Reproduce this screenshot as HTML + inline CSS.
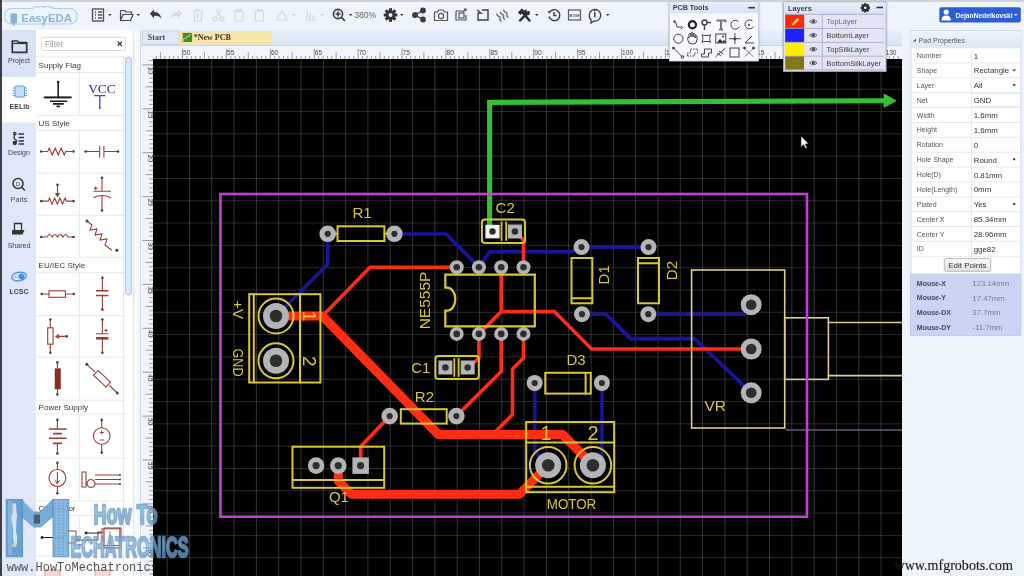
<!DOCTYPE html>
<html><head><meta charset="utf-8">
<style>
*{margin:0;padding:0;box-sizing:border-box}
svg{will-change:transform}
html,body{width:1024px;height:576px;overflow:hidden;background:#edf3fb;font-family:"Liberation Sans",sans-serif;position:relative}
.a{position:absolute}
#topline{left:0;top:0;width:1024px;height:2px;background:#cfd3d9}
#header{left:0;top:2px;width:1024px;height:29px;background:#eef4fb;border-bottom:1px solid #dde4ee}
#tabs{left:0;top:30px;width:36px;height:546px;background:#dfe7f9;border-left:2px solid #5a5e66}
#lib{left:36px;top:30px;width:97px;height:546px;background:#fff}
#split{left:133px;top:30px;width:7px;height:546px;background:#f4f8fc;border-left:1px solid #dfe7f0}
#tabbar{left:140px;top:30px;width:762px;height:16px;background:linear-gradient(#e9f0fa,#d7e5f7);border-bottom:1px solid #c8d6ea;border-left:1px solid #d0dae6}
#rulertop{left:140px;top:46px;width:762px;height:13px;background:#f1f5fb;border-left:1px solid #d0dae6}
#rulerleft{left:140px;top:59px;width:13px;height:517px;background:#f1f5fb;border-left:1px solid #d0dae6}
#canvas{left:153px;top:59px;width:749px;height:517px;background:#000;overflow:hidden}
#right{left:902px;top:30px;width:122px;height:546px;background:#eef4fc}
.tl{position:absolute;left:0;width:36px;text-align:center;font-size:7px;color:#3a3a3a;letter-spacing:-0.1px}
.hd{position:absolute;left:38px;font-size:8.4px;color:#333;}
.row{position:absolute;left:911px;width:110px;height:15px;border-bottom:1px solid #e3e8ef;background:#fff}
.lab{position:absolute;left:6px;top:3px;font-size:7.6px;color:#444}
.val{position:absolute;left:60px;top:0;width:50px;height:14px;border-left:1px solid #e3e8ef;font-size:8px;color:#222;padding:3px 0 0 3px}
.mrow{position:absolute;left:911px;width:110px;height:15px}
.ml{position:absolute;left:6px;top:3px;font-size:7.6px;font-weight:bold;color:#3d4660}
.mv{position:absolute;left:62px;top:3px;font-size:8px;color:#6a7390}
.lr{position:absolute;left:785px;width:99px;height:14px;border-bottom:1px solid #b9bfd0;background:#e6e6f5}
.sw{position:absolute;left:0;top:0;width:19px;height:13.5px}
.ey{position:absolute;left:19px;top:0;width:18px;height:13.5px;border-right:1px solid #b9bfd0}
.ln{position:absolute;left:41px;top:2.5px;font-size:7.6px;color:#333}
</style></head><body>
<div class="a" id="topline"></div>
<div class="a" id="header">
<svg class="a" style="left:0;top:-2px" width="1024" height="30" viewBox="0 0 1024 30">
<g fill="none" stroke="#b3cce6" stroke-width="1.1">
<path d="M12,8.5 L33,8.5 Q35,5.5 38,7.5 Q41,5 44,7.5 Q47,5 50,7.5 Q52,6 53,8.5 L69,8.5 Q77,8.5 77,16.3 Q77,24 69,24 L12,24 Q4.8,24 4.8,16.3 Q4.8,8.5 12,8.5 Z"/>
</g>
<path d="M10.5,15 Q10.5,13 13.8,13 Q17.1,13 17.1,15 L17.1,23 L15,23 L15,25.5 L12.6,25.5 L12.6,23 L10.5,23 Z" fill="#8ab3dc"/>
<text x="21.3" y="21.5" font-size="11.4" font-weight="bold" fill="#8db5dc" font-family="Liberation Sans">EasyEDA</text>
<path d="M44.5,21 Q44,25 42.5,26.5" stroke="#8db5dc" stroke-width="1.2" fill="none"/>
<!-- list icon -->
<g stroke="#4a4a4a" fill="none" stroke-width="1.3">
<rect x="92.5" y="9" width="11" height="12"/>
<path d="M95,12 h1 M98,12 h4 M95,15 h1 M98,15 h4 M95,18 h1 M98,18 h4"/>
</g>
<path d="M108,14 h3.5 l-1.75,2 z" fill="#333"/>
<!-- folder open -->
<path d="M120.5,10.5 h4 l1.5,1.5 h5.5 v2.5 M120.5,10.5 v10 h10 l2.5,-6 h-10 l-2.5,6" stroke="#4a4a4a" stroke-width="1.2" fill="none" stroke-linejoin="round"/>
<path d="M136.5,14 h3.5 l-1.75,2 z" fill="#333"/>
<!-- undo -->
<path d="M150,13.5 l4,-4 v2.5 q6,-0.5 7.5,7 q-2.5,-4 -7.5,-3 v2.5 z" fill="#3a3a3a"/>
<!-- redo grey -->
<path d="M182,13.5 l-4,-4 v2.5 q-6,-0.5 -7.5,7 q2.5,-4 7.5,-3 v2.5 z" fill="#d5d9de"/>
<!-- trash grey -->
<g stroke="#d3d7dc" stroke-width="1.2" fill="none">
<path d="M192.5,11 h10 M196,11 v-1.5 h3 v1.5 M194,11 l0.7,10 h6.6 l0.7,-10 M197.5,13 v6"/>
<!-- scissors -->
<circle cx="215" cy="19" r="2"/><circle cx="222" cy="19" r="2"/><path d="M216,17.5 l5,-8 M221,17.5 l-5,-8"/>
<!-- copy -->
<path d="M235,11 h8 v10 h-8 z M237,9.5 h4 v2 h-4 z"/>
<path d="M255.5,11 h8 v10 h-8 z M257.5,9.5 h4 v2 h-4 z"/>
<!-- align -->
<path d="M276,20 h12 M277,19 l5,-8 l5,8"/>
<path d="M306,20 h11 M307,20 v-10 M310,20 v-7 M313,20 v-5"/>
</g>
<path d="M292,14 h3.5 l-1.75,2 z M320.5,14 h3.5 l-1.75,2 z" fill="#c9cdd2"/>
<!-- zoom -->
<g stroke="#3c3c3c" stroke-width="1.6" fill="none">
<circle cx="338" cy="14" r="4.6"/><path d="M341.4,17.4 l3.6,3.6 M335.5,14 h5 M338,11.5 v5"/>
</g>
<path d="M349,14 h3.5 l-1.75,2 z" fill="#333"/>
<text x="354.2" y="18.3" font-size="8.6" fill="#666" font-family="Liberation Sans">380%</text>
<!-- gear -->
<g transform="translate(390.5,15)">
<circle r="4.8" fill="#333"/>
<g fill="#333"><rect x="-1.5" y="-6.8" width="3" height="13.6"/><rect x="-6.8" y="-1.5" width="13.6" height="3"/><rect x="-1.5" y="-6.8" width="3" height="13.6" transform="rotate(45)"/><rect x="-1.5" y="-6.8" width="3" height="13.6" transform="rotate(-45)"/></g>
<circle r="2" fill="#eef4fb"/>
</g>
<path d="M400,14 h3.5 l-1.75,2 z" fill="#333"/>
<!-- share -->
<g stroke="#3c3c3c" stroke-width="1.4" fill="none"><path d="M415,15 l8,-4.5 M415,15 l8,4.5"/><circle cx="415" cy="15" r="2.2" fill="#3c3c3c"/><circle cx="423" cy="10.5" r="2.2" fill="#3c3c3c"/><circle cx="423" cy="19.5" r="2.2" fill="#3c3c3c"/></g>
<!-- camera -->
<g stroke="#555" stroke-width="1.2" fill="none"><path d="M434.5,12 h3 l1.2,-2 h4.6 l1.2,2 h3 v8.5 h-13 z"/><circle cx="441" cy="16" r="2.6"/></g>
<!-- export -->
<g stroke="#555" stroke-width="1.2" fill="none"><path d="M456,11 h7 M456,11 v9 h10 v-5"/><rect x="459" y="13" width="5" height="5"/><path d="M463,12 l3,-3 M464,9 h2 v2"/></g>
<!-- import -->
<g stroke="#3c3c3c" stroke-width="1.4" fill="none"><path d="M478,13 v7 h10 v-10 h-6"/><path d="M477,10 l4,3 h-3"/></g>
<!-- wave -->
<g stroke="#666" stroke-width="1.3" fill="none"><path d="M498.5,20 q-1.5,-1.5 0,-3 q1.5,-1.5 0,-3 q-1.5,-1.5 0,-3 M502.5,20 q-1.5,-1.5 0,-3 q1.5,-1.5 0,-3 q-1.5,-1.5 0,-3 M506.5,20 q-1.5,-1.5 0,-3 q1.5,-1.5 0,-3 q-1.5,-1.5 0,-3" transform="rotate(-30 502.5 15)"/></g>
<!-- tools -->
<g stroke="#2a2a2a" stroke-width="2.4" fill="none" stroke-linecap="round"><path d="M520,20.5 l8.5,-8.5 M522,12 l7.5,8.5"/></g>
<path d="M517.8,12.5 l4,-4 l3,2.2 l-4.3,4.3 z" fill="#2a2a2a"/>
<path d="M527,9.5 a3,3 0 1 0 3,3 l-2,0.5 l-1.5,-1.5 z" fill="#2a2a2a"/>
<path d="M535,14 h3.5 l-1.75,2 z" fill="#333"/>
<!-- history -->
<g stroke="#3c3c3c" stroke-width="1.4" fill="none"><path d="M549.5,12.5 a5.5,5.5 0 1 1 -0.5,4"/><path d="M554,12 v3.5 h2.5"/></g>
<path d="M547.5,11 l2.8,0.5 l-1,2.6 z" fill="#3c3c3c"/>
<!-- BOM -->
<rect x="568.5" y="10" width="12" height="10" fill="none" stroke="#555" stroke-width="1.2"/>
<text x="574.5" y="16.8" font-size="4.2" font-weight="bold" fill="#555" text-anchor="middle" font-family="Liberation Sans">BOM</text>
<!-- info -->
<g stroke="#3c3c3c" stroke-width="1.3" fill="none"><path d="M591,19.5 a5.8,5.8 0 1 1 3,1.5 l-3,2 z"/></g>
<path d="M594.8,12.2 v5" stroke="#3c3c3c" stroke-width="1.5"/><circle cx="594.8" cy="10.6" r="0.9" fill="#3c3c3c"/>
<path d="M606,14 h3.5 l-1.75,2 z" fill="#333"/>
<!-- user button -->
<rect x="939.3" y="7.3" width="81.5" height="15.2" rx="1.8" fill="#2d5ed8"/>
<circle cx="946.2" cy="12" r="2.6" fill="#fff"/>
<path d="M941.5,20.5 q0,-5 4.7,-5 q4.7,0 4.7,5 z" fill="#fff"/>
<text x="955.5" y="18" font-size="7.6" font-weight="bold" fill="#fff" font-family="Liberation Sans" textLength="57" lengthAdjust="spacingAndGlyphs">DejanNedelkovski</text>
<path d="M1014,14 h3.5 l-1.75,2 z" fill="#fff"/>
</svg>

</div>
<div class="a" id="tabs">
<svg class="a" style="left:-2px;top:-30px" width="36" height="576" viewBox="0 0 36 576">
<rect x="2" y="30" width="34" height="47" fill="#d9e3f7"/>
<rect x="2" y="77" width="34" height="45.6" fill="#ffffff"/>
<path d="M2,122.6 h31 q3,0 3,3 v0 z" fill="#dfe7f9"/>
<!-- project folder -->
<path d="M12.3,41 h5 l1.2,1.6 h8.2 v9.8 h-14.4 z" fill="none" stroke="#333" stroke-width="1.7" stroke-linejoin="round"/>
<path d="M12.3,43.5 h14.4" stroke="#333" stroke-width="1.2"/>
<text x="19" y="63" font-size="7" fill="#444" text-anchor="middle" font-family="Liberation Sans">Project</text>
<!-- EELib chip -->
<rect x="15" y="86" width="9.5" height="11" rx="1" fill="#c7ddf5" stroke="#5a9ee0" stroke-width="1"/>
<path d="M12.5,88 h2.5 M12.5,90.5 h2.5 M12.5,93 h2.5 M12.5,95.5 h2.5 M24.5,88 h2.5 M24.5,90.5 h2.5 M24.5,93 h2.5 M24.5,95.5 h2.5" stroke="#5a9ee0" stroke-width="0.9"/>
<text x="19.5" y="109" font-size="7" font-weight="bold" fill="#444" text-anchor="middle" font-family="Liberation Sans">EELib</text>
<!-- Design -->
<g stroke="#333" stroke-width="1.3" fill="none">
<circle cx="14.8" cy="133.5" r="1.2"/><circle cx="14.8" cy="143" r="1.5" fill="#333"/>
<path d="M14.8,134.8 q-2,3 1,5 q2,1.5 -1,2.5"/>
<path d="M18.5,134 h5.5 M18.5,137.5 h5.5 M18.5,141 h5.5 M18.5,144 h5.5"/>
</g>
<text x="19" y="155" font-size="7" fill="#444" text-anchor="middle" font-family="Liberation Sans">Design</text>
<!-- Parts -->
<g stroke="#333" stroke-width="1.5" fill="none"><circle cx="18" cy="183.5" r="5"/><path d="M21.5,187 l3.5,3.5"/></g>
<text x="18" y="186" font-size="5.5" fill="#333" text-anchor="middle" font-family="Liberation Sans">D</text>
<text x="19" y="201.5" font-size="7" fill="#444" text-anchor="middle" font-family="Liberation Sans">Parts</text>
<!-- Shared -->
<path d="M14.5,223.5 h7 v8 h-7 z" fill="none" stroke="#333" stroke-width="1.3"/>
<path d="M12,230 h12.5 l-2,4.5 h-10.5 z" fill="#333"/>
<text x="19" y="248" font-size="7" fill="#444" text-anchor="middle" font-family="Liberation Sans">Shared</text>
<!-- LCSC -->
<ellipse cx="19" cy="276.5" rx="7.5" ry="4.2" fill="none" stroke="#4a8de0" stroke-width="1.2" transform="rotate(-10 19 276.5)"/>
<circle cx="21.5" cy="276.5" r="3" fill="#4a8de0"/>
<text x="12.5" y="278" font-size="4.2" fill="#4a8de0" font-family="Liberation Sans">LC</text>
<text x="19" y="294" font-size="7" font-weight="bold" fill="#444" text-anchor="middle" font-family="Liberation Sans">LCSC</text>
</svg>

</div>
<div class="a" id="lib">
<svg class="a" style="left:0;top:0" width="97" height="546" viewBox="36 30 97 546" font-family="Liberation Sans">
<!-- filter -->
<rect x="41.6" y="37.3" width="83.8" height="13.2" rx="1.5" fill="#fff" stroke="#d3dae3" stroke-width="1"/>
<text x="45" y="46.8" font-size="8.2" fill="#9a9a9a">Filter</text>
<path d="M117.6,41.6 l4.2,4.2 M121.8,41.6 l-4.2,4.2" stroke="#333" stroke-width="1.3"/>
<!-- grid lines -->
<g stroke="#e6eaef" stroke-width="1" fill="none">
<path d="M36,56.9 h89 M36,72.5 h89 M36,115.3 h89 M36,130.6 h89 M36,173.2 h89 M36,215.4 h89 M36,257.3 h89 M36,272.6 h89 M36,315.6 h89 M36,357.2 h89 M36,400.2 h89 M36,413.9 h89 M36,458 h89 M36,501 h89 M36,515.3 h89 M36,556 h89"/>
<path d="M79.4,72.5 v42.8 M79.4,130.6 v126.7 M79.4,272.6 v127.6 M79.4,413.9 v87.1 M79.4,515.3 v61"/>
<path d="M123.5,56.9 v520"/>
</g>
<g font-size="8" fill="#3a3a3a">
<text x="38.6" y="68">Supply Flag</text>
<text x="38.6" y="126">US Style</text>
<text x="38.6" y="268">EU/IEC Style</text>
<text x="38.6" y="410">Power Supply</text>
<text x="38.6" y="511">Connector</text>
</g>
<!-- scrollbar -->
<rect x="125.4" y="57" width="6" height="238" rx="3" fill="#d9e8fa" stroke="#a4c4ec" stroke-width="1"/>
<!-- GND -->
<g stroke="#1e1e1e" fill="none">
<path d="M58.2,82 v15.4" stroke-width="1.6"/>
<path d="M43.8,97.4 h27.8" stroke-width="2"/>
<path d="M49.9,101.2 h17.4 M53,103.9 h10.8 M56.5,106.4 h3.4" stroke-width="1.6"/>
</g>
<circle cx="58.2" cy="82" r="1.3" fill="#1e1e1e"/>
<!-- VCC -->
<text x="88.2" y="92.8" font-family="Liberation Serif" font-size="13.4" fill="#2a2a8c">VCC</text>
<path d="M94.2,95.6 h11.2 M99.8,95.6 v12.2" stroke="#4646a8" stroke-width="1.3" fill="none"/>
<circle cx="99.8" cy="108" r="1.1" fill="#4646a8"/>
<g stroke="#9c3d35" stroke-width="1.1" fill="none">
<!-- US resistor -->
<path d="M41.2,151.5 h6.5 l1.5,-3.3 l3,6.6 l3,-6.6 l3,6.6 l3,-6.6 l3,6.6 l1.5,-3.3 h6.8"/>
<!-- US cap -->
<path d="M85.6,151.5 h14.1 M99.7,146 v11.8 M103.9,146 v11.8 M103.9,151.5 h14.1"/>
<!-- pot -->
<path d="M41.2,201.1 h7 l1.3,-3 l2.6,6 l2.6,-6 l2.6,6 l2.6,-6 l2.6,6 l2.6,-6 l1.3,3 h6.5"/>
<path d="M57.5,185 v9"/>
<!-- pol cap -->
<path d="M102,177.7 v13.6 M93.4,191.3 h17.6 M93.4,197.8 q8.8,-4.5 17.6,0 M102,195.8 v14.7 M93.7,188.2 h4 M95.7,186.2 v4"/>
<!-- inductor -->
<path d="M41.2,237 h5.8 q2.6,-5 5.3,0 q2.6,-5 5.3,0 q2.6,-5 5.3,0 q2.6,-5 5.3,0 h5.3"/>
<!-- diag zigzag -->
<path d="M87,221 l5,4 l-2,5 l7,-1 l-2,6 l7,-1 l-2,6 l7,-1 l-2,6 l6.8,5.3"/>
<!-- EU resistor -->
<path d="M41.7,294 h7.3 M65.4,294 h8.4"/>
<rect x="49" y="290.8" width="16.4" height="6.5"/>
<!-- EU cap -->
<path d="M102.4,277.8 v13 M102.4,295.5 v14.1"/>
<path d="M96,290.8 h12.4 M96,295.5 h12.4" stroke-width="1.6"/>
<!-- EU pot -->
<rect x="47.7" y="327.8" width="5.3" height="16.4"/>
<path d="M50.3,319.5 v8.3 M50.3,344.2 v8.6 M66.7,336.4 h-11"/>
<!-- EU pol cap -->
<path d="M102.4,319.5 v14.3 M102.4,338.2 v14.6 M96,333.8 h12.4 M104.5,330.4 h3 M106,329 v3"/>
<!-- filled resistor -->
<path d="M57.4,362.4 v6 M57.4,389.3 v5.2"/>
<!-- diag box resistor -->
<path d="M86.8,364.3 l8,7.5 M109.5,385.5 l7.8,7.5"/>
<rect x="-8.5" y="-3.3" width="17" height="6.6" transform="translate(102,378.7) rotate(43)"/>
<!-- battery -->
<path d="M57.4,419.9 v9.1 M57.4,443.4 v10.1"/>
<!-- source -->
<circle cx="101.75" cy="436" r="8.3"/>
<path d="M101.75,419.9 v7.8 M101.75,444.3 v8.3 M101.75,430.5 v4 M99.8,432.5 h4 M99.8,440 h4"/>
<!-- current source -->
<circle cx="57.4" cy="478" r="8.5"/>
<path d="M57.4,462.7 v6.8 M57.4,486.5 v6.8 M57.4,472 v10"/><path d="M55.2,480.5 l2.2,3 l2.2,-3"/>
<!-- misc -->
<path d="M82,472 v15 h4 v-15 z M91,479.5 a4,4 0 1 0 0.1,0 M95,479.5 h25 M95,475 h25 M95,484 h25"/>
<!-- connector -->
<rect x="45" y="570" width="15" height="8" fill="#f3d9cf" stroke="#c98a7a" stroke-width="0.8"/><rect x="95" y="570" width="15" height="8" fill="#f3d9cf" stroke="#c98a7a" stroke-width="0.8"/>
<path d="M78,540 h20 v-8 h6 M78,545 h4"/>
<rect x="104" y="528" width="17" height="20"/>
</g>
<g fill="#9c3d35" stroke="none">
<path d="M54.8,193 h5.4 l-2.7,4.5 z"/>
<path d="M55,336.4 l4,-2.5 v5 z"/>
<rect x="54.75" y="368.4" width="6" height="20.9" fill="#8a2a22"/>
<rect x="96" y="337" width="12.4" height="2.6"/>
<path d="M48.8,428.2 h17.8 v1.6 h-17.8 z M53,432.8 h9 v1.6 h-9 z M48.8,437.4 h17.8 v1.6 h-17.8 z M53,442.6 h9 v1.6 h-9 z"/>
</g>
<g fill="#444">
<circle cx="41.2" cy="151.5" r="1.3"/><circle cx="73.5" cy="151.5" r="1.3"/>
<circle cx="85.6" cy="151.5" r="1.3"/><circle cx="118" cy="151.5" r="1.3"/>
<circle cx="41.2" cy="201.1" r="1.3"/><circle cx="73.5" cy="201.1" r="1.3"/><circle cx="57.5" cy="184.7" r="1.3"/>
<circle cx="102" cy="177.7" r="1.3"/><circle cx="102" cy="210.5" r="1.3"/>
<circle cx="41.2" cy="237" r="1.3"/><circle cx="73.5" cy="237" r="1.3"/>
<circle cx="87" cy="221" r="1.5"/><circle cx="116.8" cy="250.3" r="1.5"/>
<circle cx="41.7" cy="294" r="1.3"/><circle cx="73.8" cy="294" r="1.3"/>
<circle cx="102.4" cy="277.8" r="1.3"/><circle cx="102.4" cy="309.6" r="1.3"/>
<circle cx="50.3" cy="319.5" r="1.3"/><circle cx="50.3" cy="352.8" r="1.3"/><circle cx="66.7" cy="336.4" r="1.3"/>
<circle cx="102.4" cy="319.5" r="1.3"/><circle cx="102.4" cy="352.8" r="1.3"/>
<circle cx="57.4" cy="362.4" r="1.3"/><circle cx="57.4" cy="394.5" r="1.3"/>
<circle cx="86.8" cy="364.3" r="1.5"/><circle cx="117.25" cy="393" r="1.5"/>
<circle cx="57.4" cy="419.9" r="1.3"/><circle cx="57.4" cy="453.5" r="1.3"/>
<circle cx="101.75" cy="419.9" r="1.3"/><circle cx="101.75" cy="452.6" r="1.3"/>
<circle cx="57.4" cy="462.7" r="1.3"/><circle cx="57.4" cy="493.3" r="1.3"/>
<circle cx="120" cy="475" r="1"/><circle cx="120" cy="479.5" r="1"/><circle cx="120" cy="484" r="1"/>
<circle cx="78" cy="540" r="1.3"/>
</g>
</svg>

</div>
<div class="a" id="split"></div>
<div class="a" id="tabbar">
<svg class="a" style="left:-1px;top:0" width="762" height="16" viewBox="140 30 762 16">
<rect x="142.7" y="31" width="35.7" height="13.5" fill="#dfe9f7" stroke="#c3d2e6" stroke-width="0.8"/>
<text x="147.8" y="40" font-family="Liberation Serif" font-size="8" font-weight="bold" fill="#4a4a4a">Start</text>
<rect x="178.6" y="31" width="93.6" height="13.5" fill="#f6e4a9"/>
<rect x="182.7" y="32.9" width="9.4" height="9.1" fill="#3c8d2c"/>
<path d="M183.5,41.5 v-3 h3 v-2 h3 v-2 h2" stroke="#8fd17a" stroke-width="1" fill="none"/>
<text x="193.7" y="39.8" font-family="Liberation Serif" font-size="8" font-weight="bold" fill="#333">*New PCB</text>
</svg>

</div>
<div class="a" id="rulertop"></div>
<div class="a" id="rulerleft"></div>
<svg class="a" style="left:0;top:0" width="1024" height="576" viewBox="0 0 1024 576">
<g font-family="Liberation Sans"><path d="M156.2,56 V59 M160.6,52.2 V59 M164.9,56 V59 M169.3,56 V59 M173.7,56 V59 M178.1,56 V59 M182.5,48.8 V59 M186.9,56 V59 M191.3,56 V59 M195.7,56 V59 M200.1,56 V59 M204.4,52.2 V59 M208.8,56 V59 M213.2,56 V59 M217.6,56 V59 M222.0,56 V59 M226.4,48.8 V59 M230.8,56 V59 M235.2,56 V59 M239.6,56 V59 M244.0,56 V59 M248.3,52.2 V59 M252.7,56 V59 M257.1,56 V59 M261.5,56 V59 M265.9,56 V59 M270.3,48.8 V59 M274.7,56 V59 M279.1,56 V59 M283.5,56 V59 M287.9,56 V59 M292.2,52.2 V59 M296.6,56 V59 M301.0,56 V59 M305.4,56 V59 M309.8,56 V59 M314.2,48.8 V59 M318.6,56 V59 M323.0,56 V59 M327.4,56 V59 M331.8,56 V59 M336.1,52.2 V59 M340.5,56 V59 M344.9,56 V59 M349.3,56 V59 M353.7,56 V59 M358.1,48.8 V59 M362.5,56 V59 M366.9,56 V59 M371.3,56 V59 M375.7,56 V59 M380.0,52.2 V59 M384.4,56 V59 M388.8,56 V59 M393.2,56 V59 M397.6,56 V59 M402.0,48.8 V59 M406.4,56 V59 M410.8,56 V59 M415.2,56 V59 M419.6,56 V59 M423.9,52.2 V59 M428.3,56 V59 M432.7,56 V59 M437.1,56 V59 M441.5,56 V59 M445.9,48.8 V59 M450.3,56 V59 M454.7,56 V59 M459.1,56 V59 M463.5,56 V59 M467.8,52.2 V59 M472.2,56 V59 M476.6,56 V59 M481.0,56 V59 M485.4,56 V59 M489.8,48.8 V59 M494.2,56 V59 M498.6,56 V59 M503.0,56 V59 M507.4,56 V59 M511.8,52.2 V59 M516.1,56 V59 M520.5,56 V59 M524.9,56 V59 M529.3,56 V59 M533.7,48.8 V59 M538.1,56 V59 M542.5,56 V59 M546.9,56 V59 M551.3,56 V59 M555.6,52.2 V59 M560.0,56 V59 M564.4,56 V59 M568.8,56 V59 M573.2,56 V59 M577.6,48.8 V59 M582.0,56 V59 M586.4,56 V59 M590.8,56 V59 M595.2,56 V59 M599.5,52.2 V59 M603.9,56 V59 M608.3,56 V59 M612.7,56 V59 M617.1,56 V59 M621.5,48.8 V59 M625.9,56 V59 M630.3,56 V59 M634.7,56 V59 M639.1,56 V59 M643.5,52.2 V59 M647.8,56 V59 M652.2,56 V59 M656.6,56 V59 M661.0,56 V59 M665.4,48.8 V59 M669.8,56 V59 M674.2,56 V59 M678.6,56 V59 M683.0,56 V59 M687.3,52.2 V59 M691.7,56 V59 M696.1,56 V59 M700.5,56 V59 M704.9,56 V59 M709.3,48.8 V59 M713.7,56 V59 M718.1,56 V59 M722.5,56 V59 M726.9,56 V59 M731.2,52.2 V59 M735.6,56 V59 M740.0,56 V59 M744.4,56 V59 M748.8,56 V59 M753.2,48.8 V59 M757.6,56 V59 M762.0,56 V59 M766.4,56 V59 M770.8,56 V59 M775.1,52.2 V59 M779.5,56 V59 M783.9,56 V59 M788.3,56 V59 M792.7,56 V59 M797.1,48.8 V59 M801.5,56 V59 M805.9,56 V59 M810.3,56 V59 M814.7,56 V59 M819.0,52.2 V59 M823.4,56 V59 M827.8,56 V59 M832.2,56 V59 M836.6,56 V59 M841.0,48.8 V59 M845.4,56 V59 M849.8,56 V59 M854.2,56 V59 M858.6,56 V59 M862.9,52.2 V59 M867.3,56 V59 M871.7,56 V59 M876.1,56 V59 M880.5,56 V59 M884.9,48.8 V59 M889.3,56 V59 M893.7,56 V59 M898.1,56 V59 M149.2,60.5 H153 M142.3,64.9 H153 M149.2,69.3 H153 M149.2,73.7 H153 M149.2,78.1 H153 M149.2,82.5 H153 M145.7,86.9 H153 M149.2,91.2 H153 M149.2,95.6 H153 M149.2,100.0 H153 M149.2,104.4 H153 M142.3,108.8 H153 M149.2,113.2 H153 M149.2,117.6 H153 M149.2,122.0 H153 M149.2,126.4 H153 M145.7,130.8 H153 M149.2,135.1 H153 M149.2,139.5 H153 M149.2,143.9 H153 M149.2,148.3 H153 M142.3,152.7 H153 M149.2,157.1 H153 M149.2,161.5 H153 M149.2,165.9 H153 M149.2,170.3 H153 M145.7,174.6 H153 M149.2,179.0 H153 M149.2,183.4 H153 M149.2,187.8 H153 M149.2,192.2 H153 M142.3,196.6 H153 M149.2,201.0 H153 M149.2,205.4 H153 M149.2,209.8 H153 M149.2,214.2 H153 M145.7,218.5 H153 M149.2,222.9 H153 M149.2,227.3 H153 M149.2,231.7 H153 M149.2,236.1 H153 M142.3,240.5 H153 M149.2,244.9 H153 M149.2,249.3 H153 M149.2,253.7 H153 M149.2,258.1 H153 M145.7,262.4 H153 M149.2,266.8 H153 M149.2,271.2 H153 M149.2,275.6 H153 M149.2,280.0 H153 M142.3,284.4 H153 M149.2,288.8 H153 M149.2,293.2 H153 M149.2,297.6 H153 M149.2,302.0 H153 M145.7,306.4 H153 M149.2,310.7 H153 M149.2,315.1 H153 M149.2,319.5 H153 M149.2,323.9 H153 M142.3,328.3 H153 M149.2,332.7 H153 M149.2,337.1 H153 M149.2,341.5 H153 M149.2,345.9 H153 M145.7,350.2 H153 M149.2,354.6 H153 M149.2,359.0 H153 M149.2,363.4 H153 M149.2,367.8 H153 M142.3,372.2 H153 M149.2,376.6 H153 M149.2,381.0 H153 M149.2,385.4 H153 M149.2,389.8 H153 M145.7,394.1 H153 M149.2,398.5 H153 M149.2,402.9 H153 M149.2,407.3 H153 M149.2,411.7 H153 M142.3,416.1 H153 M149.2,420.5 H153 M149.2,424.9 H153 M149.2,429.3 H153 M149.2,433.7 H153 M145.7,438.0 H153 M149.2,442.4 H153 M149.2,446.8 H153 M149.2,451.2 H153 M149.2,455.6 H153 M142.3,460.0 H153 M149.2,464.4 H153 M149.2,468.8 H153 M149.2,473.2 H153 M149.2,477.6 H153 M145.7,481.9 H153 M149.2,486.3 H153 M149.2,490.7 H153 M149.2,495.1 H153 M149.2,499.5 H153 M142.3,503.9 H153 M149.2,508.3 H153 M149.2,512.7 H153 M149.2,517.1 H153 M149.2,521.5 H153 M145.7,525.9 H153 M149.2,530.2 H153 M149.2,534.6 H153 M149.2,539.0 H153 M149.2,543.4 H153 M142.3,547.8 H153 M149.2,552.2 H153 M149.2,556.6 H153 M149.2,561.0 H153 M149.2,565.4 H153 M145.7,569.8 H153 M149.2,574.1 H153" stroke="#8a8f96" stroke-width="0.9" fill="none"/>
<text x="183.1" y="54.8" font-size="6.6" fill="#444">50</text>
<text x="227.0" y="54.8" font-size="6.6" fill="#444">55</text>
<text x="270.9" y="54.8" font-size="6.6" fill="#444">60</text>
<text x="314.8" y="54.8" font-size="6.6" fill="#444">65</text>
<text x="358.7" y="54.8" font-size="6.6" fill="#444">70</text>
<text x="402.6" y="54.8" font-size="6.6" fill="#444">75</text>
<text x="446.5" y="54.8" font-size="6.6" fill="#444">80</text>
<text x="490.4" y="54.8" font-size="6.6" fill="#444">85</text>
<text x="534.3" y="54.8" font-size="6.6" fill="#444">90</text>
<text x="578.2" y="54.8" font-size="6.6" fill="#444">95</text>
<text x="622.1" y="54.8" font-size="6.6" fill="#444">100</text>
<text x="666.0" y="54.8" font-size="6.6" fill="#444">105</text>
<text x="709.9" y="54.8" font-size="6.6" fill="#444">110</text>
<text x="753.8" y="54.8" font-size="6.6" fill="#444">115</text>
<text x="797.7" y="54.8" font-size="6.6" fill="#444">120</text>
<text x="841.6" y="54.8" font-size="6.6" fill="#444">125</text>
<text x="885.5" y="54.8" font-size="6.6" fill="#444">130</text>
<text x="0" y="0" transform="translate(147.6,66.7) rotate(90)" font-size="6.6" fill="#444">10</text>
<text x="0" y="0" transform="translate(147.6,110.6) rotate(90)" font-size="6.6" fill="#444">15</text>
<text x="0" y="0" transform="translate(147.6,154.5) rotate(90)" font-size="6.6" fill="#444">20</text>
<text x="0" y="0" transform="translate(147.6,198.4) rotate(90)" font-size="6.6" fill="#444">25</text>
<text x="0" y="0" transform="translate(147.6,242.3) rotate(90)" font-size="6.6" fill="#444">30</text>
<text x="0" y="0" transform="translate(147.6,286.2) rotate(90)" font-size="6.6" fill="#444">35</text>
<text x="0" y="0" transform="translate(147.6,330.1) rotate(90)" font-size="6.6" fill="#444">40</text>
<text x="0" y="0" transform="translate(147.6,374.0) rotate(90)" font-size="6.6" fill="#444">45</text>
<text x="0" y="0" transform="translate(147.6,417.9) rotate(90)" font-size="6.6" fill="#444">50</text>
<text x="0" y="0" transform="translate(147.6,461.8) rotate(90)" font-size="6.6" fill="#444">55</text>
<text x="0" y="0" transform="translate(147.6,505.7) rotate(90)" font-size="6.6" fill="#444">60</text>
<text x="0" y="0" transform="translate(147.6,549.6) rotate(90)" font-size="6.6" fill="#444">65</text></g>
</svg>
<div class="a" id="canvas">
<svg width="749" height="517" viewBox="153 59 749 517">
<defs>
<pattern id="grid" x="166.65" y="66.4" width="22.31" height="22.31" patternUnits="userSpaceOnUse">
<path d="M0,0 L22.31,0 M0,0 L0,22.31" stroke="#545454" stroke-width="1.2" fill="none"/>
</pattern>
</defs>
<rect x="153" y="59" width="749" height="517" fill="url(#grid)"/>
<g font-family="Liberation Sans, sans-serif">
<path d="M276.0,316.0 L327.7,264.4 L327.7,233.8" stroke="#16169a" stroke-width="3.6" fill="none" stroke-linejoin="round" stroke-linecap="round" />
<path d="M394.4,234.0 L446.0,234.0 L479.0,267.0" stroke="#16169a" stroke-width="3.6" fill="none" stroke-linejoin="round" stroke-linecap="round" />
<path d="M479.0,267.0 L489.6,251.8 L571.0,251.8 L581.5,247.1" stroke="#16169a" stroke-width="3.6" fill="none" stroke-linejoin="round" stroke-linecap="round" />
<path d="M581.5,247.1 L648.5,247.1" stroke="#16169a" stroke-width="3.6" fill="none" stroke-linejoin="round" stroke-linecap="round" />
<path d="M582.0,314.2 L606.0,314.2 L630.5,338.6 L694.6,338.6 L751.2,392.8" stroke="#16169a" stroke-width="3.6" fill="none" stroke-linejoin="round" stroke-linecap="round" />
<path d="M648.3,314.2 L744.0,314.2 L751.2,304.7" stroke="#16169a" stroke-width="3.6" fill="none" stroke-linejoin="round" stroke-linecap="round" />
<path d="M534.8,383.0 L534.8,451.3 L548.2,465.3" stroke="#16169a" stroke-width="3.6" fill="none" stroke-linejoin="round" stroke-linecap="round" />
<path d="M602.0,383.0 L602.0,456.0 L592.9,465.3" stroke="#16169a" stroke-width="3.6" fill="none" stroke-linejoin="round" stroke-linecap="round" />
<path d="M276.0,316.0 L322.5,316.0 L438.3,434.5 L562.5,434.5 L593.0,465.3" stroke="#ff2d14" stroke-width="9" fill="none" stroke-linejoin="round" stroke-linecap="round" />
<path d="M338.3,465.6 L338.3,481.0 L351.5,494.3 L519.4,494.3 L547.8,465.3" stroke="#ff2d14" stroke-width="9" fill="none" stroke-linejoin="round" stroke-linecap="round" />
<path d="M322.5,316.0 L370.0,267.3 L456.7,267.3" stroke="#ff2d14" stroke-width="3.6" fill="none" stroke-linejoin="round" stroke-linecap="round" />
<path d="M501.2,267.3 L501.2,311.6 L554.4,311.6 L591.6,348.9 L751.2,349.0" stroke="#ff2d14" stroke-width="3.6" fill="none" stroke-linejoin="round" stroke-linecap="round" />
<path d="M478.9,333.9 L501.2,311.6" stroke="#ff2d14" stroke-width="3.6" fill="none" stroke-linejoin="round" stroke-linecap="round" />
<path d="M478.9,333.9 L478.9,358.0 L469.0,367.5" stroke="#ff2d14" stroke-width="3.6" fill="none" stroke-linejoin="round" stroke-linecap="round" />
<path d="M501.2,333.9 L501.2,371.5 L456.4,416.1" stroke="#ff2d14" stroke-width="3.6" fill="none" stroke-linejoin="round" stroke-linecap="round" />
<path d="M523.5,333.9 L523.5,358.0 L512.5,369.0 L512.5,414.5 L494.0,433.0" stroke="#ff2d14" stroke-width="3.6" fill="none" stroke-linejoin="round" stroke-linecap="round" />
<path d="M514.9,231.5 L523.5,240.0 L523.5,267.3" stroke="#ff2d14" stroke-width="3.6" fill="none" stroke-linejoin="round" stroke-linecap="round" />
<path d="M389.7,416.1 L360.6,446.7 L360.6,465.6" stroke="#ff2d14" stroke-width="3.6" fill="none" stroke-linejoin="round" stroke-linecap="round" />
<rect x="691.6" y="270.0" width="93.1" height="158.0" rx="0" stroke="#ddd08c" stroke-width="1.6" fill="none"/>
<rect x="784.7" y="317.8" width="43.7" height="61.6" rx="0" stroke="#ddd08c" stroke-width="1.6" fill="none"/>
<path d="M828.4,322.5 L905.0,322.5" stroke="#ddd08c" stroke-width="1.6" fill="none" stroke-linejoin="round" stroke-linecap="round" />
<path d="M828.4,375.6 L905.0,375.6" stroke="#ddd08c" stroke-width="1.6" fill="none" stroke-linejoin="round" stroke-linecap="round" />
<path d="M489.6,226 L489.6,102.4 L886,100.7" stroke="#33c133" stroke-width="5.1" fill="none" stroke-linejoin="miter"/>
<polygon points="884,94 896.2,100.7 884,107.4" fill="#33c133" stroke="#33c133" stroke-width="0.8" stroke-linejoin="round"/>
<rect x="337.5" y="226.3" width="46.9" height="14.7" rx="0" stroke="#d8c63a" stroke-width="2" fill="none"/>
<path d="M335.0,233.8 L337.5,233.8" stroke="#d8c63a" stroke-width="2" fill="none" stroke-linejoin="round" stroke-linecap="round" />
<path d="M384.4,233.8 L387.0,233.8" stroke="#d8c63a" stroke-width="2" fill="none" stroke-linejoin="round" stroke-linecap="round" />
<circle cx="327.7" cy="233.8" r="8.3" fill="#b4b4b4"/><circle cx="327.7" cy="233.8" r="3.1" fill="#2e2e2e"/>
<circle cx="394.4" cy="233.8" r="8.3" fill="#b4b4b4"/><circle cx="394.4" cy="233.8" r="3.1" fill="#2e2e2e"/>
<text x="362.0" y="217.5" font-size="15" fill="#d8c63a" text-anchor="middle" >R1</text>
<rect x="400.8" y="409.2" width="45.9" height="14.4" rx="0" stroke="#d8c63a" stroke-width="2" fill="none"/>
<circle cx="389.7" cy="416.1" r="8.3" fill="#b4b4b4"/><circle cx="389.7" cy="416.1" r="3.1" fill="#2e2e2e"/>
<circle cx="456.4" cy="416.1" r="8.3" fill="#b4b4b4"/><circle cx="456.4" cy="416.1" r="3.1" fill="#2e2e2e"/>
<text x="424.4" y="402.2" font-size="15" fill="#d8c63a" text-anchor="middle" >R2</text>
<rect x="481.9" y="219.6" width="43.1" height="23.4" rx="3" stroke="#d8c63a" stroke-width="2" fill="none"/>
<rect x="485.4" y="224.8" width="14.2" height="13.6" fill="#f4f4f4"/><circle cx="492.5" cy="231.5" r="3.2" fill="#2e2e2e"/>
<rect x="507.9" y="224.5" width="14.0" height="14.0" fill="#b4b4b4"/><circle cx="514.9" cy="231.5" r="3.3" fill="#2e2e2e"/>
<path d="M501.5,222.5 L501.5,240.0" stroke="#d8c63a" stroke-width="1.8" fill="none" stroke-linejoin="round" stroke-linecap="round" />
<path d="M506.2,222.5 L506.2,240.0" stroke="#d8c63a" stroke-width="1.8" fill="none" stroke-linejoin="round" stroke-linecap="round" />
<text x="505.2" y="212.9" font-size="15" fill="#d8c63a" text-anchor="middle" >C2</text>
<rect x="435.4" y="356.0" width="43.4" height="23.0" rx="3" stroke="#d8c63a" stroke-width="2" fill="none"/>
<rect x="438.4" y="360.5" width="14.0" height="14.0" fill="#b4b4b4"/><circle cx="445.4" cy="367.5" r="3.3" fill="#2e2e2e"/>
<rect x="460.7" y="360.5" width="14.0" height="14.0" fill="#b4b4b4"/><circle cx="467.7" cy="367.5" r="3.3" fill="#2e2e2e"/>
<path d="M454.3,359.0 L454.3,376.0" stroke="#d8c63a" stroke-width="1.8" fill="none" stroke-linejoin="round" stroke-linecap="round" />
<path d="M458.7,359.0 L458.7,376.0" stroke="#d8c63a" stroke-width="1.8" fill="none" stroke-linejoin="round" stroke-linecap="round" />
<text x="420.8" y="372.7" font-size="15" fill="#d8c63a" text-anchor="middle" >C1</text>
<path d="M445.3,274.7 L534.8,274.7 L534.8,326.3 L445.3,326.3 L445.3,310.6 L447.3,310.6 A8,11.45 0 0 0 447.3,287.7 L445.3,287.7 Z" stroke="#d8c63a" stroke-width="2.2" fill="none"/>
<circle cx="456.7" cy="267.3" r="7.0" fill="#b4b4b4"/><circle cx="456.7" cy="267.3" r="3.3" fill="#2e2e2e"/>
<circle cx="456.7" cy="333.9" r="7.0" fill="#b4b4b4"/><circle cx="456.7" cy="333.9" r="3.3" fill="#2e2e2e"/>
<circle cx="478.9" cy="267.3" r="7.0" fill="#b4b4b4"/><circle cx="478.9" cy="267.3" r="3.3" fill="#2e2e2e"/>
<circle cx="478.9" cy="333.9" r="7.0" fill="#b4b4b4"/><circle cx="478.9" cy="333.9" r="3.3" fill="#2e2e2e"/>
<circle cx="501.2" cy="267.3" r="7.0" fill="#b4b4b4"/><circle cx="501.2" cy="267.3" r="3.3" fill="#2e2e2e"/>
<circle cx="501.2" cy="333.9" r="7.0" fill="#b4b4b4"/><circle cx="501.2" cy="333.9" r="3.3" fill="#2e2e2e"/>
<circle cx="523.5" cy="267.3" r="7.0" fill="#b4b4b4"/><circle cx="523.5" cy="267.3" r="3.3" fill="#2e2e2e"/>
<circle cx="523.5" cy="333.9" r="7.0" fill="#b4b4b4"/><circle cx="523.5" cy="333.9" r="3.3" fill="#2e2e2e"/>
<text x="0" y="0" transform="translate(424.0,300.5) rotate(-90)" font-size="15.5" fill="#d8c63a" text-anchor="middle" dominant-baseline="central" >NE555P</text>
<rect x="571.5" y="258.0" width="20.8" height="45.3" rx="0" stroke="#d8c63a" stroke-width="2" fill="none"/>
<path d="M571.5,298.3 L592.3,298.3" stroke="#d8c63a" stroke-width="2" fill="none" stroke-linejoin="round" stroke-linecap="round" />
<circle cx="581.5" cy="247.1" r="8.0" fill="#b4b4b4"/><circle cx="581.5" cy="247.1" r="3.1" fill="#2e2e2e"/>
<circle cx="582.0" cy="314.2" r="8.0" fill="#b4b4b4"/><circle cx="582.0" cy="314.2" r="3.1" fill="#2e2e2e"/>
<text x="0" y="0" transform="translate(603.8,274.8) rotate(-90)" font-size="15" fill="#d8c63a" text-anchor="middle" dominant-baseline="central" >D1</text>
<rect x="638.0" y="258.0" width="21.0" height="45.3" rx="0" stroke="#d8c63a" stroke-width="2" fill="none"/>
<path d="M638.0,263.3 L659.0,263.3" stroke="#d8c63a" stroke-width="2" fill="none" stroke-linejoin="round" stroke-linecap="round" />
<circle cx="648.5" cy="247.1" r="8.0" fill="#b4b4b4"/><circle cx="648.5" cy="247.1" r="3.1" fill="#2e2e2e"/>
<circle cx="648.3" cy="314.2" r="8.0" fill="#b4b4b4"/><circle cx="648.3" cy="314.2" r="3.1" fill="#2e2e2e"/>
<text x="0" y="0" transform="translate(671.5,270.6) rotate(-90)" font-size="15" fill="#d8c63a" text-anchor="middle" dominant-baseline="central" >D2</text>
<rect x="545.3" y="372.8" width="45.5" height="20.8" rx="0" stroke="#d8c63a" stroke-width="2" fill="none"/>
<path d="M585.6,372.8 L585.6,393.6" stroke="#d8c63a" stroke-width="2" fill="none" stroke-linejoin="round" stroke-linecap="round" />
<circle cx="534.7" cy="383.0" r="8.0" fill="#b4b4b4"/><circle cx="534.7" cy="383.0" r="3.1" fill="#2e2e2e"/>
<circle cx="601.9" cy="383.0" r="8.0" fill="#b4b4b4"/><circle cx="601.9" cy="383.0" r="3.1" fill="#2e2e2e"/>
<text x="576.0" y="365.4" font-size="15" fill="#d8c63a" text-anchor="middle" >D3</text>
<circle cx="751.2" cy="304.7" r="10.5" fill="#b4b4b4"/><circle cx="751.2" cy="304.7" r="5.3" fill="#2e2e2e"/>
<circle cx="751.2" cy="349.0" r="10.5" fill="#b4b4b4"/><circle cx="751.2" cy="349.0" r="5.3" fill="#2e2e2e"/>
<circle cx="751.2" cy="392.8" r="10.5" fill="#b4b4b4"/><circle cx="751.2" cy="392.8" r="5.3" fill="#2e2e2e"/>
<text x="715.3" y="411.3" font-size="15.5" fill="#d8c63a" text-anchor="middle" >VR</text>
<rect x="249.2" y="294.2" width="71.2" height="88.3" rx="0" stroke="#d8c63a" stroke-width="2" fill="none"/>
<path d="M253.8,294.2 L253.8,382.5" stroke="#d8c63a" stroke-width="2" fill="none" stroke-linejoin="round" stroke-linecap="round" />
<path d="M300.0,294.2 L300.0,382.5" stroke="#d8c63a" stroke-width="2" fill="none" stroke-linejoin="round" stroke-linecap="round" />
<circle cx="276" cy="316.0" r="17.5" stroke="#d8c63a" stroke-width="2" fill="none"/>
<circle cx="276.0" cy="316.0" r="13.0" fill="#b4b4b4"/><circle cx="276.0" cy="316.0" r="6.3" fill="#2e2e2e"/>
<circle cx="276" cy="360.8" r="17.5" stroke="#d8c63a" stroke-width="2" fill="none"/>
<circle cx="276.0" cy="360.8" r="13.0" fill="#b4b4b4"/><circle cx="276.0" cy="360.8" r="6.3" fill="#2e2e2e"/>
<text x="0" y="0" transform="translate(309.0,316.0) rotate(90)" font-size="19" fill="#d8c63a" text-anchor="middle" dominant-baseline="central" >1</text>
<text x="0" y="0" transform="translate(309.0,361.2) rotate(90)" font-size="19" fill="#d8c63a" text-anchor="middle" dominant-baseline="central" >2</text>
<text x="0" y="0" transform="translate(238.0,309.5) rotate(90)" font-size="15" fill="#d8c63a" text-anchor="middle" dominant-baseline="central" >+V</text>
<text x="0" y="0" transform="translate(238.0,362.5) rotate(90)" font-size="15" fill="#d8c63a" text-anchor="middle" dominant-baseline="central" textLength="28" lengthAdjust="spacingAndGlyphs">GND</text>
<rect x="292.5" y="446.7" width="91.7" height="41.1" rx="0" stroke="#d8c63a" stroke-width="2" fill="none"/>
<path d="M292.5,480.0 L384.2,480.0" stroke="#d8c63a" stroke-width="2" fill="none" stroke-linejoin="round" stroke-linecap="round" />
<circle cx="316.1" cy="465.6" r="8.3" fill="#b4b4b4"/><circle cx="316.1" cy="465.6" r="3.6" fill="#2e2e2e"/>
<circle cx="338.3" cy="465.6" r="8.3" fill="#b4b4b4"/><circle cx="338.3" cy="465.6" r="3.6" fill="#2e2e2e"/>
<rect x="352.4" y="457.4" width="16.5" height="16.5" fill="#b4b4b4"/><circle cx="360.6" cy="465.6" r="3.6" fill="#2e2e2e"/>
<text x="338.9" y="502.2" font-size="15" fill="#d8c63a" text-anchor="middle" >Q1</text>
<rect x="526.2" y="422.0" width="88.0" height="70.2" rx="0" stroke="#d8c63a" stroke-width="2" fill="none"/>
<path d="M526.2,442.6 L614.2,442.6" stroke="#d8c63a" stroke-width="2" fill="none" stroke-linejoin="round" stroke-linecap="round" />
<path d="M526.2,486.7 L614.2,486.7" stroke="#d8c63a" stroke-width="2" fill="none" stroke-linejoin="round" stroke-linecap="round" />
<circle cx="548.2" cy="465.3" r="18.3" stroke="#d8c63a" stroke-width="2" fill="none"/>
<circle cx="548.2" cy="465.3" r="13.0" fill="#b4b4b4"/><circle cx="548.2" cy="465.3" r="6.3" fill="#2e2e2e"/>
<circle cx="592.9" cy="465.3" r="18.3" stroke="#d8c63a" stroke-width="2" fill="none"/>
<circle cx="592.9" cy="465.3" r="13.0" fill="#b4b4b4"/><circle cx="592.9" cy="465.3" r="6.3" fill="#2e2e2e"/>
<text x="546.1" y="439.8" font-size="20" fill="#d8c63a" text-anchor="middle" >1</text>
<text x="593.0" y="439.8" font-size="20" fill="#d8c63a" text-anchor="middle" >2</text>
<text x="571.5" y="508.9" font-size="15" fill="#d8c63a" text-anchor="middle" textLength="49.5" lengthAdjust="spacingAndGlyphs">MOTOR</text>
<path d="M786.0,430.0 L905.0,430.0" stroke="#6e5676" stroke-width="1.3" fill="none" stroke-linejoin="round" stroke-linecap="round" />
<rect x="220.4" y="194.0" width="586.6" height="322.7" rx="0" stroke="#c23fd6" stroke-width="2.6" fill="none"/>
<path d="M801,136 L801,147 L803.6,144.6 L805.4,148.6 L807,147.8 L805.3,144 L808.6,143.8 Z" fill="#fff" stroke="#222" stroke-width="0.6"/>
</g>
</svg>
</div>
<div class="a" id="right">
</div>
<svg class="a" style="left:0;top:0" width="1024" height="576" viewBox="0 0 1024 576" font-family="Liberation Sans">
<defs><linearGradient id="tg" x1="0" y1="0" x2="0" y2="1"><stop offset="0" stop-color="#f0f5fc"/><stop offset="1" stop-color="#dbe5f4"/></linearGradient><linearGradient id="bg" x1="0" y1="0" x2="0" y2="1"><stop offset="0" stop-color="#fafafa"/><stop offset="1" stop-color="#e2e2e2"/></linearGradient></defs>
<rect x="910.9" y="30.6" width="110.1" height="305" fill="#fff" stroke="#cdd8e6" stroke-width="1"/>
<rect x="911.4" y="31.1" width="109.1" height="17.2" fill="url(#tg)"/>
<path d="M913,41.5 l3,-3 v3 z" fill="#555"/>
<text x="918.6" y="42.7" font-size="7" fill="#555">Pad Properties</text>
<path d="M911.4,63.0 H1020.5" stroke="#e6eaf0" stroke-width="1"/>
<text x="916.8" y="58.1" font-size="7" fill="#555">Number</text>
<text x="973.7" y="58.5" font-size="7.9" fill="#333">1</text>
<path d="M911.4,77.8 H1020.5" stroke="#e6eaf0" stroke-width="1"/>
<text x="916.8" y="73.0" font-size="7" fill="#555">Shape</text>
<text x="973.7" y="73.4" font-size="7.9" fill="#333">Rectangle</text>
<path d="M1012.5,69.4 h3.4 l-1.7,2.2 z" fill="#222"/>
<path d="M911.4,92.7 H1020.5" stroke="#e6eaf0" stroke-width="1"/>
<text x="916.8" y="87.8" font-size="7" fill="#555">Layer</text>
<text x="973.7" y="88.2" font-size="7.9" fill="#333">All</text>
<path d="M1012.5,84.2 h3.4 l-1.7,2.2 z" fill="#222"/>
<path d="M911.4,107.6 H1020.5" stroke="#e6eaf0" stroke-width="1"/>
<text x="916.8" y="102.7" font-size="7" fill="#555">Net</text>
<rect x="971.5" y="93.5" width="49" height="13.3" fill="#fff" stroke="#dde5ef" stroke-width="1"/>
<text x="973.7" y="103.1" font-size="7.9" fill="#333">GND</text>
<path d="M911.4,122.5 H1020.5" stroke="#e6eaf0" stroke-width="1"/>
<text x="916.8" y="117.6" font-size="7" fill="#555">Width</text>
<text x="973.7" y="118.0" font-size="7.9" fill="#333">1.6mm</text>
<path d="M911.4,137.3 H1020.5" stroke="#e6eaf0" stroke-width="1"/>
<text x="916.8" y="132.4" font-size="7" fill="#555">Height</text>
<text x="973.7" y="132.8" font-size="7.9" fill="#333">1.6mm</text>
<path d="M911.4,152.2 H1020.5" stroke="#e6eaf0" stroke-width="1"/>
<text x="916.8" y="147.3" font-size="7" fill="#555">Rotation</text>
<text x="973.7" y="147.7" font-size="7.9" fill="#333">0</text>
<path d="M911.4,167.1 H1020.5" stroke="#e6eaf0" stroke-width="1"/>
<text x="916.8" y="162.2" font-size="7" fill="#555">Hole Shape</text>
<text x="973.7" y="162.6" font-size="7.9" fill="#333">Round</text>
<path d="M1012.5,158.6 h3.4 l-1.7,2.2 z" fill="#222"/>
<path d="M911.4,181.9 H1020.5" stroke="#e6eaf0" stroke-width="1"/>
<text x="916.8" y="177.1" font-size="7" fill="#555">Hole(D)</text>
<text x="973.7" y="177.5" font-size="7.9" fill="#333">0.81mm</text>
<path d="M911.4,196.8 H1020.5" stroke="#e6eaf0" stroke-width="1"/>
<text x="916.8" y="191.9" font-size="7" fill="#555">Hole(Length)</text>
<text x="973.7" y="192.3" font-size="7.9" fill="#333">0mm</text>
<path d="M911.4,211.7 H1020.5" stroke="#e6eaf0" stroke-width="1"/>
<text x="916.8" y="206.8" font-size="7" fill="#555">Plated</text>
<text x="973.7" y="207.2" font-size="7.9" fill="#333">Yes</text>
<path d="M1012.5,203.2 h3.4 l-1.7,2.2 z" fill="#222"/>
<path d="M911.4,226.5 H1020.5" stroke="#e6eaf0" stroke-width="1"/>
<text x="916.8" y="221.7" font-size="7" fill="#555">Center X</text>
<text x="973.7" y="222.1" font-size="7.9" fill="#333">85.34mm</text>
<path d="M911.4,241.4 H1020.5" stroke="#e6eaf0" stroke-width="1"/>
<text x="916.8" y="236.5" font-size="7" fill="#555">Center Y</text>
<text x="973.7" y="236.9" font-size="7.9" fill="#333">28.96mm</text>
<path d="M911.4,256.3 H1020.5" stroke="#e6eaf0" stroke-width="1"/>
<text x="916.8" y="251.4" font-size="7" fill="#555">ID</text>
<text x="973.7" y="251.8" font-size="7.9" fill="#333">gge82</text>
<path d="M971.5,48.6 V258" stroke="#e6eaf0" stroke-width="1"/>
<rect x="944.3" y="258.6" width="46.3" height="12.7" rx="1" fill="url(#bg)" stroke="#b4b4b4" stroke-width="0.9"/>
<text x="967.4" y="267.8" font-size="8" fill="#333" text-anchor="middle">Edit Points</text>
<rect x="910.6" y="274" width="110" height="61.3" fill="#c9d5f3" stroke="#bccbec" stroke-width="0.8"/>
<text x="916.8" y="285.5" font-size="7" font-weight="bold" fill="#3f4861">Mouse-X</text>
<text x="972.3" y="285.7" font-size="7.8" fill="#727b95">123.14mm</text>
<text x="916.8" y="300.3" font-size="7" font-weight="bold" fill="#3f4861">Mouse-Y</text>
<text x="972.3" y="300.5" font-size="7.8" fill="#727b95">17.47mm</text>
<text x="916.8" y="315.1" font-size="7" font-weight="bold" fill="#3f4861">Mouse-DX</text>
<text x="972.3" y="315.3" font-size="7.8" fill="#727b95">37.7mm</text>
<text x="916.8" y="329.9" font-size="7" font-weight="bold" fill="#3f4861">Mouse-DY</text>
<text x="972.3" y="330.1" font-size="7.8" fill="#727b95">-11.7mm</text>
<text x="894.5" y="570.2" font-family="Liberation Serif" font-size="15" fill="#1a1a1a" stroke="#1a1a1a" stroke-width="0.15" textLength="118.5" lengthAdjust="spacingAndGlyphs">www.mfgrobots.com</text>
</svg>
<svg class="a" style="left:0;top:0" width="1024" height="80" viewBox="0 0 1024 80" font-family="Liberation Sans">
<defs>
<linearGradient id="ptg" x1="0" y1="0" x2="0" y2="1"><stop offset="0" stop-color="#e6eefa"/><stop offset="1" stop-color="#d6e3f6"/></linearGradient>
<filter id="sh" x="-10%" y="-10%" width="120%" height="130%"><feDropShadow dx="0" dy="1" stdDeviation="1" flood-color="#000" flood-opacity="0.35"/></filter>
</defs>
<!-- PCB tools -->
<rect x="669.5" y="1.9" width="88.9" height="59.1" fill="#f7f9fc" stroke="#c3cedd" stroke-width="0.8" filter="url(#sh)"/>
<rect x="669.9" y="2.3" width="88.1" height="11" fill="url(#ptg)"/>
<text x="672.7" y="10.4" font-size="7.2" font-weight="bold" fill="#3c4048">PCB Tools</text>
<path d="M748.5,7.7 h6.5" stroke="#333" stroke-width="1.6"/>
<g stroke="#444" stroke-width="1" fill="none">
<!-- row1 -->
<path d="M674.5,22 q1,0 1.5,1 l1,4 h3" /><circle cx="674.5" cy="21.5" r="0.8" fill="#444"/><circle cx="681.5" cy="27.5" r="1" />
<circle cx="692.4" cy="24.8" r="3.6" stroke-width="2.2" stroke="#222"/>
<circle cx="704.5" cy="22.5" r="2.5" stroke-width="1.4"/><path d="M704.5,25 v5 M707,22.5 h4" stroke-width="1.4"/>
<path d="M716.5,20.5 h9 v2 M721,20.5 v9 M719,29.5 h4" stroke="#777" stroke-width="2"/>
<path d="M738.5,21.5 a4.5,4.5 0 1 0 1,5" />
<path d="M752.5,21 a4.5,4.5 0 1 0 1,5.5" /><circle cx="749" cy="25" r="0.6" fill="#444"/>
<!-- row2 -->
<circle cx="678.4" cy="38.7" r="4.6"/>
<path d="M689,43 q-2,-3 -1,-6 l1,1 v-4 q1,-1 2,0 v3 v-4 q1,-1 2,0 v4 v-3 q1,-1 2,0 v4 v-2 q1,-1 2,0 v4 q0,4 -4,4 z" />
<path d="M702,34.5 l1.5,1 h5.5 l1.5,-1 l-1,4 l1,4 l-1.5,-1 h-5.5 l-1.5,1 l1,-4 z"/>
<rect x="715.8" y="34" width="10" height="9"/>
<path d="M728.9,38.7 h12 M734.9,33 v11"/>
<path d="M745,43 h9 M745,43 l7,-7"/>
<!-- row3 -->
<path d="M673.5,48 l9,9"/><circle cx="673.5" cy="48" r="1" fill="#444"/><circle cx="682.5" cy="57" r="1.3"/>
<path d="M687.5,56 v-3 h3 v-4 h7 v4 h-3 v3 z" stroke-dasharray="1.5,1"/>
<path d="M701.5,57 v-3 h3 v-5 h7 v4 h-3 v4 z"/>
<path d="M715.5,57 l10,-9 M717,53 l4,3 M719,51 l4,3"/>
<rect x="730" y="48" width="9" height="9"/>
<path d="M744.5,48 l9,9 M753.5,48 l-9,9" stroke-dasharray="2,1"/><circle cx="744.5" cy="48" r="1" fill="#444"/><circle cx="753.5" cy="48" r="1" fill="#444"/>
</g>
<path d="M717,42.5 l3,-3.5 l2.5,2.5 l1.5,-1.5 l2,2.5 z" fill="#222"/><circle cx="723" cy="36.5" r="1" fill="#222"/>
<circle cx="734.9" cy="38.7" r="1.5" fill="#444"/>
<!-- Layers -->
<rect x="783.6" y="2" width="102.4" height="69.3" fill="#e6e6f5" stroke="#aeb5c4" stroke-width="0.9" filter="url(#sh)"/>
<rect x="784" y="2.4" width="101.6" height="11.6" fill="url(#ptg)"/>
<text x="788" y="10.6" font-size="7.4" font-weight="bold" fill="#3c4048">Layers</text>
<g transform="translate(865.3,7.8)">
<circle r="3.4" fill="#2c2c2c"/>
<g fill="#2c2c2c"><rect x="-1.1" y="-4.7" width="2.2" height="9.4"/><rect x="-4.7" y="-1.1" width="9.4" height="2.2"/><rect x="-1.1" y="-4.7" width="2.2" height="9.4" transform="rotate(45)"/><rect x="-1.1" y="-4.7" width="2.2" height="9.4" transform="rotate(-45)"/></g>
<circle r="1.4" fill="#e0e8f6"/>
</g>
<path d="M876.5,7.5 h6.5" stroke="#333" stroke-width="1.6"/>
<g>
<rect x="785.2" y="14.6" width="98.9" height="13.8" fill="#e4e4f6"/>
<rect x="785.2" y="28.4" width="98.9" height="13.9" fill="#e4e4f6"/>
<rect x="785.2" y="42.3" width="98.9" height="13.9" fill="#e4e4f6"/>
<rect x="785.2" y="56.2" width="98.9" height="13.6" fill="#e4e4f6"/>
<rect x="785.2" y="14.6" width="18.9" height="13.8" fill="#ff2800"/>
<rect x="785.2" y="28.4" width="18.9" height="13.9" fill="#1f1fff"/>
<rect x="785.2" y="42.3" width="18.9" height="13.9" fill="#ffee00"/>
<rect x="785.2" y="56.2" width="18.9" height="13.6" fill="#807812"/>
</g>
<path d="M785.2,28.4 h98.9 M785.2,42.3 h98.9 M785.2,56.2 h98.9 M822.3,14.6 v55.2 M785.2,14.3 h98.9 M784.4,69.8 h100" stroke="#9fa6b8" stroke-width="0.8"/>
<path d="M797.5,18 l1.8,1.8 l-5,5 l-2.2,0.5 l0.5,-2.2 z" fill="#ffd27a"/>
<g fill="none" stroke="#555" stroke-width="0.9">
<path d="M809.5,21.5 q3.8,-3.6 7.6,0 q-3.8,3.6 -7.6,0 z"/>
<path d="M809.5,35.3 q3.8,-3.6 7.6,0 q-3.8,3.6 -7.6,0 z"/>
<path d="M809.5,49.2 q3.8,-3.6 7.6,0 q-3.8,3.6 -7.6,0 z"/>
<path d="M809.5,63 q3.8,-3.6 7.6,0 q-3.8,3.6 -7.6,0 z"/>
</g>
<g fill="#444"><circle cx="813.3" cy="21.5" r="1.5"/><circle cx="813.3" cy="35.3" r="1.5"/><circle cx="813.3" cy="49.2" r="1.5"/><circle cx="813.3" cy="63" r="1.5"/></g>
<g font-size="7.5" fill="#3a3a3a">
<text x="826.5" y="24.4" fill="#5b64b8">TopLayer</text>
<text x="826.5" y="38.3">BottomLayer</text>
<text x="826.5" y="52.2">TopSilkLayer</text>
<text x="826.5" y="66">BottomSilkLayer</text>
</g>
</svg>

<div class="a" style="left:0;top:0;width:1.6px;height:576px;background:#3d4047"></div>
<svg class="a" style="left:0;top:0" width="1024" height="576" viewBox="0 0 1024 576">
<defs>
<linearGradient id="wg" x1="0" y1="0" x2="0" y2="1">
<stop offset="0" stop-color="#5f98cc"/><stop offset="0.45" stop-color="#9dc8ec"/><stop offset="0.55" stop-color="#7fb3e0"/><stop offset="1" stop-color="#4a84b8"/>
</linearGradient>
<linearGradient id="wg2" x1="0" y1="0" x2="1" y2="0">
<stop offset="0" stop-color="#5d9ad0"/><stop offset="0.5" stop-color="#9fcbef"/><stop offset="1" stop-color="#5d9ad0"/>
</linearGradient>
</defs>
<!-- library connector symbols (under watermark) -->
<g stroke="#222" stroke-width="1" fill="none"><path d="M42,537.5 h22 M86,533 h16"/></g>
<circle cx="42" cy="537.5" r="1.4" fill="#222"/><circle cx="86" cy="533" r="1.4" fill="#222"/>
<g stroke="#a0453a" stroke-width="1" fill="none">
<path d="M64,531 h12 v12 h-12 z"/>
<rect x="102" y="528.8" width="17.8" height="16.8"/>
</g>
<text x="108.5" y="535.5" font-size="5" fill="#444" font-family="Liberation Sans">1</text>
<text x="108.5" y="543" font-size="5" fill="#444" font-family="Liberation Sans">2</text>
<g opacity="0.93">
<!-- M left leg -->
<rect x="6.2" y="499.5" width="16.3" height="57.3" fill="#5f9ad0" stroke="#4a80b2" stroke-width="0.8"/>
<rect x="8" y="501" width="4" height="54" fill="#8fc0e8" opacity="0.6"/>
<path d="M12.5,504 q2,-2 3.5,0 l0.5,8 q1.5,4 0,9 l-0.5,10 q2,6 1,12 q-1,4 -3,0 q-2,-5 -1,-11 l-1,-10 q-1.5,-5 0.5,-9 z" fill="#eef2f6" opacity="0.8"/>
<circle cx="14.5" cy="545" r="2.2" fill="#f0cdb0" opacity="0.9"/>
<circle cx="11" cy="551" r="0.9" fill="#e0a080"/>
<!-- M diagonal -->
<path d="M21.5,499.5 L33.8,512 L40,512 L53,499.5 L53,516.4 L40.6,527 L33.8,527 L22.5,517 Z" fill="#6ea7d8" stroke="#4a80b2" stroke-width="0.8"/>
<path d="M24,502 L34,512" stroke="#a8d0f0" stroke-width="1.5" opacity="0.7"/>
<rect x="33.8" y="514.6" width="6.2" height="9" fill="#3f5061"/>
<!-- right leg -->
<rect x="53" y="499.5" width="15.8" height="57.3" fill="#79b1de" stroke="#4a80b2" stroke-width="0.8"/>
<path d="M54,503 h14 M54,506 h14 M54,509 h14 M54,512 h14 M54,515 h14 M54,518 h14 M54,521 h14 M54,524 h14 M54,527 h14 M54,530 h14 M54,533 h14 M54,536 h14 M54,539 h14 M54,542 h14 M54,545 h14 M54,548 h14 M54,551 h14 M54,554 h14" stroke="#3f6f9c" stroke-width="0.5" opacity="0.55"/>
<path d="M57,500 v56 M61,500 v56 M65,500 v56" stroke="#c3def5" stroke-width="0.6" opacity="0.6"/>
</g><g opacity="0.78"><g font-family="Liberation Sans" font-weight="bold" fill="url(#wg)" stroke="#6b9dc8" stroke-width="2.4" stroke-linejoin="round">
<text x="0" y="0" transform="translate(93.5,523.8) scale(0.635,1)" font-size="28.5">How To</text>
<text x="0" y="0" transform="translate(70.5,556.9) scale(0.565,1)" font-size="28.8">ECHATRONICS</text>
</g>
</g>
<clipPath id="wc"><rect x="0" y="540" width="153" height="36"/></clipPath><text x="6.7" y="570.8" font-family="Liberation Mono" font-size="12" fill="#505050" clip-path="url(#wc)">www.HowToMechatronics.com</text>
</svg>

</body></html>
